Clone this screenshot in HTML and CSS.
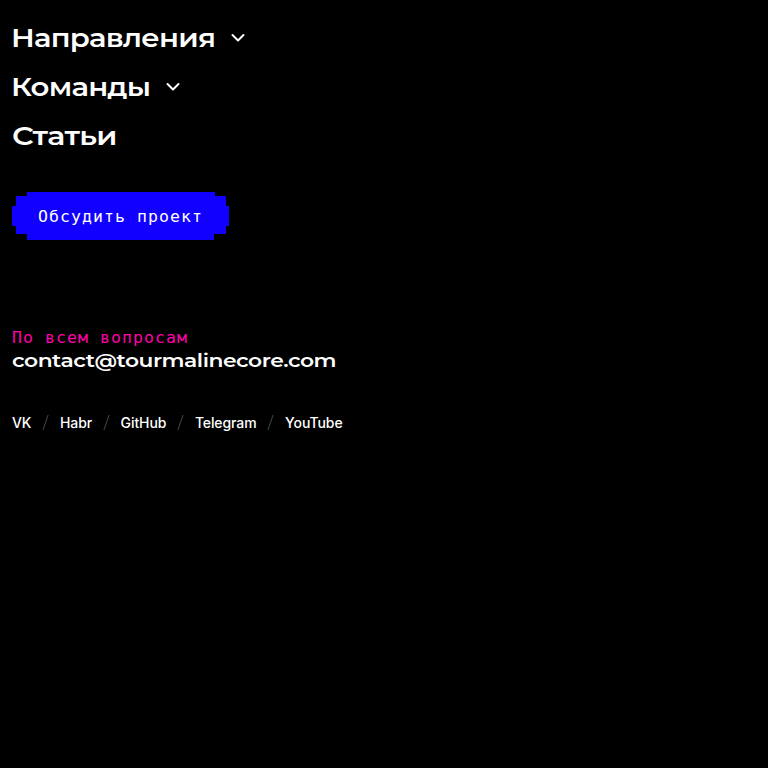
FILE: index.html
```html
<!DOCTYPE html>
<html lang="ru">
<head>
<meta charset="utf-8">
<title>Tourmaline Core</title>
<link rel="stylesheet" href="styles.css">
</head>
<body>
<nav class="nav">
  <a class="nav-item"><span class="label directions">Направления</span><svg class="chevron" viewBox="0 0 14 10"><path d="M1.5 2 7 7.5 12.5 2"/></svg></a>
  <a class="nav-item"><span class="label teams">Команды</span><svg class="chevron" viewBox="0 0 14 10"><path d="M1.5 2 7 7.5 12.5 2"/></svg></a>
  <a class="nav-item"><span class="label articles">Статьи</span></a>
</nav>
<button class="cta">Обсудить проект</button>
<section class="contact">
  <p class="caption">По всем вопросам</p>
  <a class="email"><span class="email-text">contact@tourmalinecore.com</span></a>
</section>
<ul class="socials">
  <li>VK</li><li>Habr</li><li>GitHub</li><li>Telegram</li><li>YouTube</li>
</ul>
</body>
</html>
```
FILE: styles.css
```css
* { box-sizing: border-box; }
body { margin: 0; padding: 21px 12px; background: #000; color: #fff; font-family: Inter, sans-serif; }
.nav { display: flex; flex-direction: column; gap: 15px; }
.nav-item { display: flex; align-items: center; height: 34px; }
.label { font: 600 25px/34px Montserrat, Inter, sans-serif; letter-spacing: -.6px; display: block; white-space: nowrap; transform-origin: 0 50%; }
.directions { width: 219px; margin-left: -1px; margin-right: 1px; transform: scaleX(1.163); }
.teams { width: 154px; margin-left: -1px; margin-right: 1px; transform: scaleX(1.168); }
.articles { transform: scaleX(1.205); }
.chevron { width: 14px; height: 10px; fill: none; stroke: #fff; stroke-width: 2; stroke-linecap: round; stroke-linejoin: round; }
.cta { display: block; width: 217px; height: 48px; margin: 39px 0 0; padding: 2px 0 0; border: 0; color: #fff; background: #10f; font: 16.5px/46px "DejaVu Sans Mono", monospace; letter-spacing: 1.07px; clip-path: polygon(15px 0, 203px 0, 203px 4px, 214px 4px, 214px 14px, 217px 14px, 217px 34px, 214px 34px, 214px 42px, 202px 42px, 202px 48px, 15px 48px, 15px 42px, 4px 42px, 4px 34px, 0 34px, 0 14px, 4px 14px, 4px 4px, 15px 4px); }
.contact { margin-top: 87px; }
.caption { margin: 0; color: #f0a; font: 16.5px/22px "DejaVu Sans Mono", monospace; letter-spacing: 1.07px; }
.email { display: block; font: 600 19px/24px Montserrat, Inter, sans-serif; }
.email-text { display: inline-block; letter-spacing: -.4px; transform: scaleX(1.147); transform-origin: 0 50%; }
.socials { display: flex; list-style: none; margin: 39px 0 0; padding: 0; font: 500 14px/22px Inter, sans-serif; letter-spacing: -.1px; }
.socials li { display: flex; align-items: center; }
.socials li + li::before { content: ""; width: 1px; height: 15px; margin: 0 13.8px; background: #484848; transform: translateY(-1px) skewX(-19deg); }
```
